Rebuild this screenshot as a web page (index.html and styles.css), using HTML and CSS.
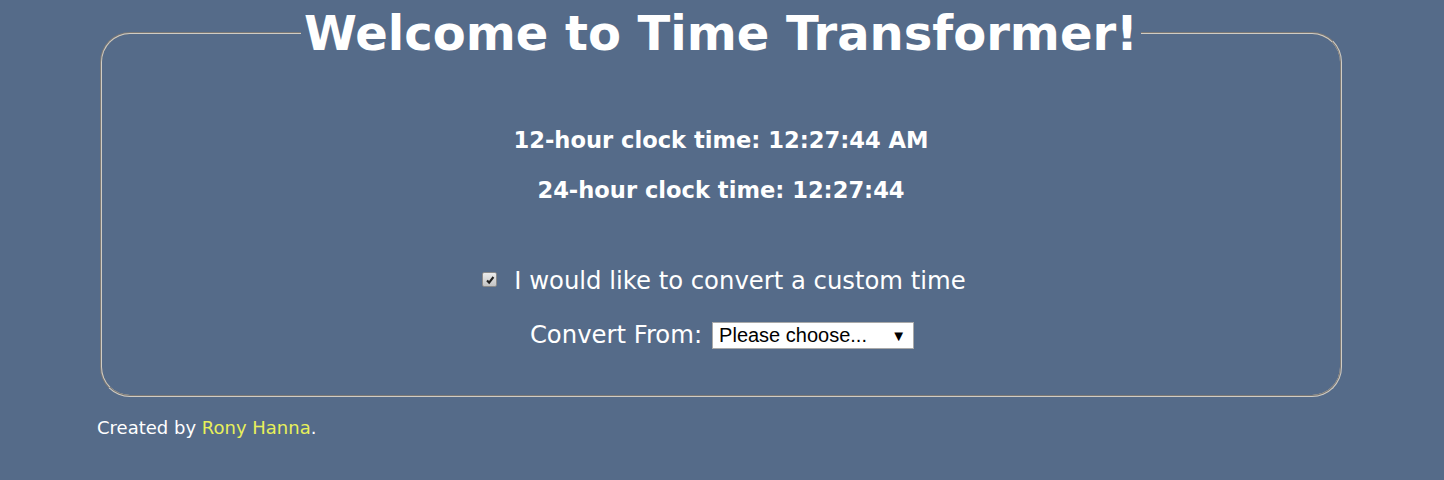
FILE: index.html
```html
<!DOCTYPE html>
<html>
<head>
<meta charset="utf-8">
<link rel="stylesheet" href="styles.css">
</head>
<body>
<fieldset class="panel">
  <legend class="title">Welcome to Time Transformer!</legend>
  <p class="clock clock-first">12-hour clock time: 12:27:44 AM</p>
  <p class="clock">24-hour clock time: 12:27:44</p>
  <div class="custom-row">
    <span class="check"><svg viewBox="0 0 14 14" width="14" height="14"><path d="M3.5 7.5 L6 10 L11 3.5" fill="none" stroke="#222" stroke-width="2.4"/></svg></span>
    <span class="custom-label">I would like to convert a custom time</span>
  </div>
  <div class="convert-row">
    <span class="convert-label">Convert From:</span>
    <span class="select"><span class="select-text">Please choose...</span><span class="arrow">▼</span></span>
  </div>
</fieldset>
<p class="footer">Created by <span class="author">Rony Hanna</span>.</p>
</body>
</html>
```
FILE: styles.css
```css
html, body {
  margin: 0;
  padding: 0;
}
body {
  background: #556b89;
  color: #ffffff;
  font-family: "DejaVu Sans", Verdana, sans-serif;
}
.panel {
  box-sizing: border-box;
  width: 1242px;
  margin: 0 auto 0 100px;
  padding: 0 0 46px;
  border: 2px groove #d0ccc4;
  border-radius: 30px;
}
.title {
  margin: 0 auto;
  padding: 0 3px;
  font-size: 48px;
  font-weight: bold;
  line-height: 66px;
}
.clock {
  margin: 0;
  text-align: center;
  font-size: 22.6px;
  font-weight: bold;
  line-height: 26px;
}
.clock-first {
  margin-top: 61px;
  margin-bottom: 24px;
}
.custom-row {
  margin-top: 64px;
  display: flex;
  justify-content: center;
  align-items: center;
  gap: 10px;
  padding-left: 6px;
}
.check {
  display: inline-flex;
  box-sizing: border-box;
  width: 15px;
  height: 15px;
  border: 1px solid #8a8a8a;
  border-radius: 2px;
  background: linear-gradient(#ececec, #c4c4c4);
  align-items: center;
  justify-content: center;
  margin-right: 7px;
  margin-top: -3px;
}
.check svg {
  display: block;
  width: 12px;
  height: 12px;
}
.custom-label {
  font-size: 24.3px;
  line-height: 28px;
}
.convert-row {
  margin-top: 26px;
  display: flex;
  justify-content: center;
  align-items: center;
  gap: 10px;
  padding-left: 2px;
}
.convert-label {
  font-size: 24.3px;
  line-height: 28px;
}
.select {
  position: relative;
  box-sizing: border-box;
  width: 202px;
  height: 27px;
  background: #ffffff;
  border: 1px solid #a9a9a9;
  color: #000000;
  font-family: "Liberation Sans", Arial, sans-serif;
  font-size: 20px;
  line-height: 25px;
  padding-left: 6px;
}
.arrow {
  position: absolute;
  right: 7px;
  top: 0;
  font-size: 15px;
  line-height: 25px;
}
.footer {
  margin: 20px 0 0 97px;
  font-size: 18px;
  line-height: 22px;
}
.author {
  color: #e8f05a;
}
```
